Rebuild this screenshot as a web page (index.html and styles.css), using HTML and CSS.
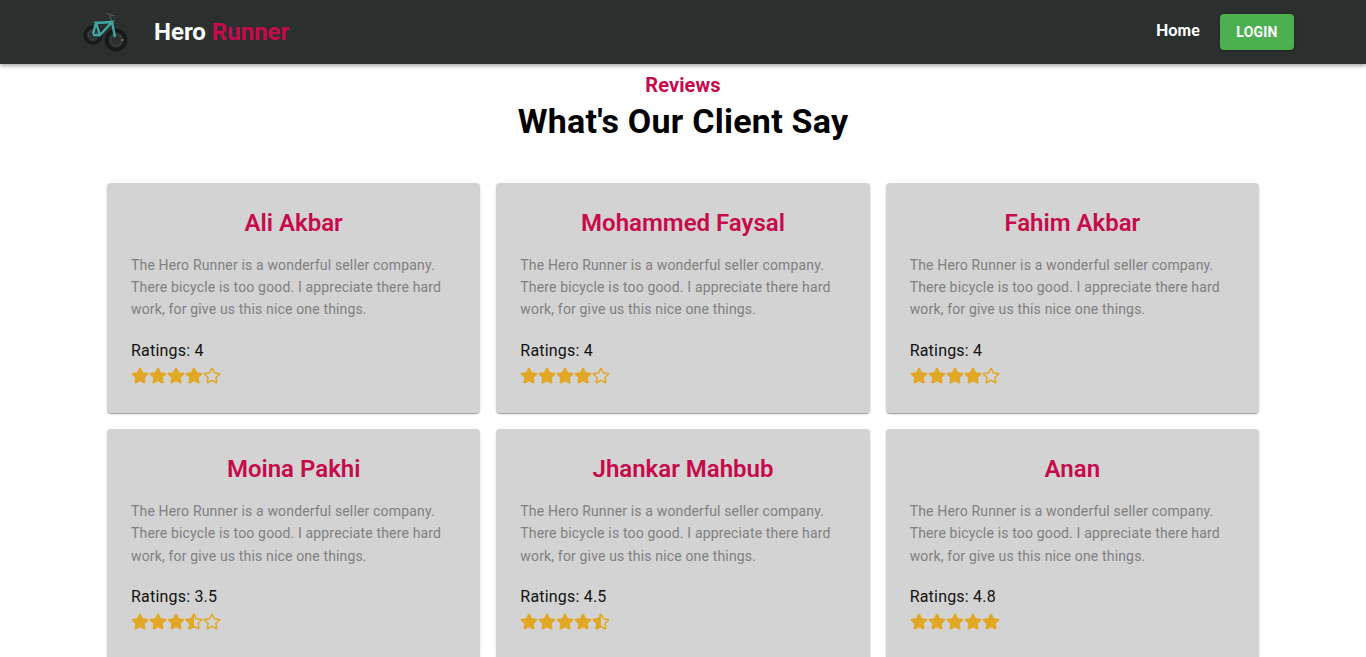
FILE: index.html
```html
<!DOCTYPE html>
<html>
<head>
  <title>Hero Runner - Reviews</title>
  <link rel="stylesheet" href="styles.css">
</head>
<body>
  <svg class="defs" width="0" height="0">
    <symbol id="star-full" viewBox="0 0 576 512">
      <path d="M259.3 17.8L194 150.2 47.9 171.5c-26.2 3.8-36.7 36.1-17.7 54.6l105.7 103-25 145.5c-4.5 26.3 23.2 46 46.4 33.7L288 439.6l130.7 68.7c23.2 12.2 50.9-7.4 46.4-33.7l-25-145.5 105.7-103c19-18.5 8.5-50.8-17.7-54.6L382 150.2 316.7 17.8c-11.7-23.6-45.6-24-57.4 0z"/>
    </symbol>
    <symbol id="star-empty" viewBox="0 0 576 512">
      <path d="M528.1 171.5L382 150.2 316.7 17.8c-11.7-23.6-45.6-23.9-57.4 0L194 150.2 47.9 171.5c-26.2 3.8-36.7 36.1-17.7 54.6l105.7 103-25 145.5c-4.5 26.3 23.2 46 46.4 33.7L288 439.6l130.7 68.7c23.2 12.2 50.9-7.4 46.4-33.7l-25-145.5 105.7-103c19-18.5 8.5-50.8-17.7-54.6zM388.6 312.3l23.7 138.4L288 385.4l-124.3 65.3 23.7-138.4-100.6-98 139-20.2 62.2-126 62.2 126 139 20.2-100.6 98z"/>
    </symbol>
    <symbol id="star-half" viewBox="0 0 576 512">
      <path d="M528.1 171.5L382 150.2 316.7 17.8c-11.7-23.6-45.6-23.9-57.4 0L194 150.2 47.9 171.5c-26.2 3.8-36.7 36.1-17.7 54.6l105.7 103-25 145.5c-4.5 26.3 23.2 46 46.4 33.7L288 439.6l130.7 68.7c23.2 12.2 50.9-7.4 46.4-33.7l-25-145.5 105.7-103c19-18.5 8.5-50.8-17.7-54.6zM388.6 312.3l23.7 138.4L288 385.4l-124.3 65.3 23.7-138.4-100.6-98 139-20.2 62.2-126 62.2 126 139 20.2-100.6 98z"/>
      <path d="M288 0c-11.4 0-22.8 5.9-28.7 17.8L194 150.2 47.9 171.4c-26.2 3.8-36.7 36.1-17.7 54.6l105.7 103-25 145.5c-4.5 26.1 23 46 46.4 33.7L288 439.6V0z"/>
    </symbol>
  </svg>

  <header class="navbar">
    <div class="brand">
      <svg class="logo" viewBox="0 0 46 40">
        <circle class="tyre" cx="11" cy="23" r="8"/>
        <circle class="rim" cx="11" cy="23" r="4.5"/>
        <circle class="tyre" cx="34" cy="28" r="9.5"/>
        <circle class="rim" cx="34" cy="28" r="5.5"/>
        <circle class="hub" cx="40.5" cy="28" r="1"/>
        <path class="bars" d="M30 11l-2-8 M24 1l5 2 4 1 M17 10h-5"/>
        <path class="frame" d="M14 11l16-1-12 13z M30 10l3 15 M14 11l-3 11 M18 23l-7 0"/>
      </svg>
      <span class="brand-name">Hero <span class="accent">Runner</span></span>
    </div>
    <nav class="nav-links">
      <a class="nav-link" href="#">Home</a>
      <button class="login-btn">Login</button>
    </nav>
  </header>

  <main class="reviews">
    <h6 class="section-label">Reviews</h6>
    <h2 class="section-title">What's Our Client Say</h2>

    <div class="review-grid" id="reviewGrid"></div>
  </main>

  <script>
    const reviews = [
      { name: 'Ali Akbar', rating: 4 },
      { name: 'Mohammed Faysal', rating: 4 },
      { name: 'Fahim Akbar', rating: 4 },
      { name: 'Moina Pakhi', rating: 3.5 },
      { name: 'Jhankar Mahbub', rating: 4.5 },
      { name: 'Anan', rating: 4.8 }
    ];

    const comment = 'The Hero Runner is a wonderful seller company. There bicycle is too good. I appreciate there hard work, for give us this nice one things.';

    function renderStars(rating) {
      let html = '';
      for (let i = 1; i <= 5; i++) {
        let kind = 'empty';
        if (rating >= i - 0.25) kind = 'full';
        else if (rating >= i - 0.75) kind = 'half';
        html += `<svg class="star"><use href="#star-${kind}"/></svg>`;
      }
      return html;
    }

    document.getElementById('reviewGrid').innerHTML = reviews.map(review => `
      <div class="review-card">
        <h4 class="review-name">${review.name}</h4>
        <p class="review-text">${comment}</p>
        <div class="review-rating">Ratings: ${review.rating}</div>
        <div class="stars">${renderStars(review.rating)}</div>
      </div>
    `).join('');
  </script>
</body>
</html>
```

FILE: styles.css
```css
body { margin: 0; font-family: Roboto, "Liberation Sans", sans-serif; background: #fff; color: #000; }
.defs { display: block; height: 0; }

.navbar { height: 64px; padding: 0 72px 0 82px; display: flex; align-items: center; justify-content: space-between; background: #2b2f2d; box-shadow: 0 2px 4px rgba(0,0,0,0.35); position: relative; }
.brand { display: flex; align-items: center; gap: 26px; }
.logo { width: 46px; height: 40px; filter: blur(0.45px); }
.tyre { fill: none; stroke: #15191a; stroke-width: 3.4; }
.rim { fill: none; stroke: #565b58; stroke-width: 1; stroke-dasharray: 1.5 1.5; }
.hub { fill: #8a8a3a; }
.frame { fill: none; stroke: #3fa8a3; stroke-width: 2.4; }
.bars { fill: none; stroke: #5a5f5c; stroke-width: 1; }
.brand-name { font-size: 24px; font-weight: 700; color: #fff; }
.accent { color: #c70a4b; }
.nav-links { display: flex; align-items: center; gap: 20px; }
.nav-link { margin-bottom: 6px; font-family: Lato, sans-serif; font-size: 16px; font-weight: 900; letter-spacing: 0.15px; color: #fff; text-decoration: none; }
.login-btn { width: 74px; height: 36px; padding: 0; border: none; border-radius: 4px; background: #4caf50; color: #fff; font-family: Roboto, sans-serif; font-size: 14px; font-weight: 700; letter-spacing: 0.2px; text-transform: uppercase; box-shadow: 0 1px 3px rgba(0,0,0,0.3); }

.reviews { width: 1152px; margin: 0 auto; text-align: center; }
.section-label { margin: 9px 0 0; font-size: 20px; line-height: 24px; font-weight: 700; letter-spacing: 0.1px; color: #c70a4b; }
.section-title { margin: 0 0 38px; font-size: 34px; line-height: 48px; font-weight: 700; letter-spacing: 0.25px; }

.review-grid { display: grid; grid-template-columns: repeat(3, 1fr); gap: 16px; }
.review-card { height: 230.4px; box-sizing: border-box; padding: 24px; background: #d3d3d3; border-radius: 4px; box-shadow: 0 2px 1px -1px rgba(0,0,0,0.2), 0 1px 1px 0 rgba(0,0,0,0.14), 0 1px 3px 0 rgba(0,0,0,0.12); text-align: left; }
.review-name { margin: 0 0 14.6px; font-size: 24px; line-height: 32px; font-weight: 600; color: #c70a4b; text-align: center; }
.review-text { margin: 0 0 18.2px; font-size: 14px; line-height: 22.4px; letter-spacing: 0.16px; color: #808080; }
.review-rating { font-size: 16px; line-height: 24px; letter-spacing: 0.2px; color: #111; }
.stars { display: flex; height: 20px; }
.star { width: 18px; height: 17px; margin-top: 4px; fill: #e2a725; }
```
